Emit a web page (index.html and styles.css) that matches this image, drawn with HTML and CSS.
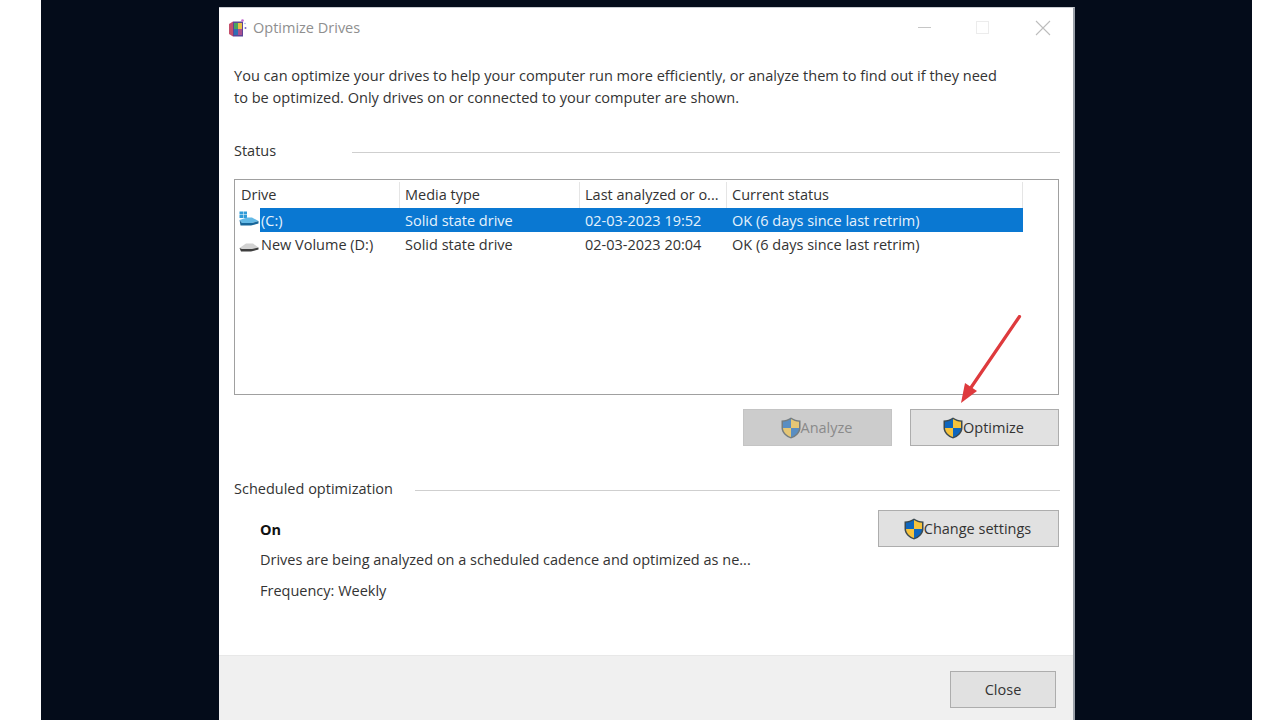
FILE: index.html
```html
<!DOCTYPE html>
<html lang="en">
<head>
    <meta charset="UTF-8">
    <title>Optimize Drives</title>
    <link rel="stylesheet" href="styles.css">
</head>
<body>
    <svg width="0" height="0" class="defs">
        <symbol id="shield" viewBox="0 0 20 22">
            <path d="M10 0.500 C7 2.500 4 3.500 0.500 3.500 V11 C0.500 16 5 20 10 21.500 C15 20 19.500 16 19.500 11 V3.500 C16 3.500 13 2.500 10 0.500 Z" fill="#3c4a50"/>
            <path d="M10 2 C7.500 3.600 5 4.600 2 4.800 V11 H10 Z" fill="#0f66bd"/>
            <path d="M10 2 C12.500 3.600 15 4.600 18 4.800 V11 H10 Z" fill="#f6c33c"/>
            <path d="M2 11 H10 V20 C6 18.800 2.300 15.500 2 11 Z" fill="#f6c33c"/>
            <path d="M18 11 H10 V20 C14 18.800 17.700 15.500 18 11 Z" fill="#0f66bd"/>
        </symbol>
    </svg>
    <div class="stage">
        <div class="window">
            <div class="titlebar">
                <svg class="app-icon" width="18" height="18" viewBox="0 0 18 18">
                    <path d="M0 5 L4 2.500 V17.500 L0 15 Z" fill="#c4506c"/>
                    <path d="M4 2.500 H14 V17.500 H4 Z" fill="#5d4596"/>
                    <rect x="5" y="4" width="4" height="6" fill="#4aa35f"/>
                    <rect x="9" y="4" width="4" height="6" fill="#e9bf48"/>
                    <rect x="5" y="10" width="4" height="6" fill="#2f6fb5"/>
                    <rect x="9" y="10" width="4" height="6" fill="#a8508f"/>
                    <circle cx="13.500" cy="1.500" r="1.300" fill="#c56ad0"/>
                    <circle cx="16.500" cy="9" r="1" fill="#7a68c8"/>
                    <circle cx="16" cy="4.500" r="0.800" fill="#9fb4e8"/>
                </svg>
                <span class="title">Optimize Drives</span>
                <div class="controls">
                    <svg width="16" height="16" viewBox="0 0 16 16"><path d="M1 7.500 H14" stroke="#c6c6c6" stroke-width="1"/></svg>
                    <svg width="16" height="16" viewBox="0 0 16 16"><rect x="0.500" y="1.500" width="12" height="12" fill="none" stroke="#ececec"/></svg>
                    <svg width="16" height="16" viewBox="0 0 16 16"><path d="M1 1 L15 15 M15 1 L1 15" stroke="#bdbdbd" stroke-width="1.100"/></svg>
                </div>
            </div>

            <div class="content">
                <p class="intro">You can optimize your drives to help your computer run more efficiently, or analyze them to find out if they need<br>to be optimized. Only drives on or connected to your computer are shown.</p>

                <div class="group-head status-head">
                    <span>Status</span>
                    <i></i>
                </div>

                <div class="list">
                    <div class="row head">
                        <div>Drive</div>
                        <div>Media type</div>
                        <div>Last analyzed or o...</div>
                        <div>Current status</div>
                    </div>
                    <div class="row selected">
                        <div class="drive">
                            <svg width="20" height="18" viewBox="0 0 20 18">
                                <rect x="0.500" y="0.500" width="3.500" height="3" fill="#2f9bd8"/>
                                <rect x="4.500" y="0.500" width="3.500" height="3" fill="#2f9bd8"/>
                                <rect x="0.500" y="4" width="3.500" height="3" fill="#2f9bd8"/>
                                <rect x="4.500" y="4" width="3.500" height="3" fill="#2f9bd8"/>
                                <path d="M0.500 9 L8 6.500 H13 L19.500 10 L13 12 H3 Z" fill="#63b9e6"/>
                                <path d="M0.500 9 L1.500 14.500 H12 L19.500 12.500 V10 L13 12 H3 Z" fill="#17669a"/>
                            </svg>
                            <span>(C:)</span>
                        </div>
                        <div>Solid state drive</div>
                        <div>02-03-2023 19:52</div>
                        <div>OK (6 days since last retrim)</div>
                    </div>
                    <div class="row">
                        <div class="drive">
                            <svg width="20" height="18" viewBox="0 0 20 18">
                                <path d="M0.500 12 L7 7.500 H14 L19.500 11.500 L13 13 H3 Z" fill="#d2d2d2"/>
                                <path d="M0.500 12 L2 15.500 H12 L19.500 13.500 V11.500 L13 13 H3 Z" fill="#3f3f3f"/>
                            </svg>
                            <span>New Volume (D:)</span>
                        </div>
                        <div>Solid state drive</div>
                        <div>02-03-2023 20:04</div>
                        <div>OK (6 days since last retrim)</div>
                    </div>
                </div>

                <div class="actions">
                    <button class="btn disabled"><svg width="20" height="22"><use href="#shield"/></svg>Analyze</button>
                    <button class="btn"><svg width="20" height="22"><use href="#shield"/></svg>Optimize</button>
                </div>

                <div class="group-head sched-head">
                    <span>Scheduled optimization</span>
                    <i></i>
                </div>

                <div class="sched">
                    <div class="sched-text">
                        <div class="on">On</div>
                        <div class="desc">Drives are being analyzed on a scheduled cadence and optimized as ne...</div>
                        <div class="freq">Frequency: Weekly</div>
                    </div>
                    <button class="btn change"><svg width="20" height="22"><use href="#shield"/></svg>Change settings</button>
                </div>
            </div>

            <div class="footer">
                <button class="btn close">Close</button>
            </div>

            <!-- red annotation arrow -->
            <svg class="arrow" width="70" height="100" viewBox="0 0 70 100">
                <path d="M63.500 1.500 L14 74" stroke="#de3a3d" stroke-width="3.200" stroke-linecap="round"/>
                <path d="M5 88 L9 68 L21 76 Z" fill="#de3a3d"/>
            </svg>
        </div>
    </div>
</body>
</html>
```

FILE: styles.css
```css
* {
    margin: 0;
    padding: 0;
    box-sizing: border-box;
}
body {
    background: #fff;
    font-family: "Open Sans", "Noto Sans", sans-serif;
    font-size: 14.5px;
    color: #333;
    width: 1280px;
    height: 720px;
    overflow: hidden;
}
.defs {
    position: absolute;
}
.stage {
    margin-left: 41px;
    width: 1211px;
    height: 720px;
    background: #040c1a;
    padding: 7px 0 0 178px;
}
.window {
    width: 856px;
    height: 713px;
    background: #fff;
    border-right: 2px solid #9aa0a8;
    border-top: 1px solid #c9ccd2;
    display: flex;
    flex-direction: column;
    position: relative;
}
.titlebar {
    height: 39px;
    display: flex;
    align-items: center;
    padding-left: 10px;
    flex-shrink: 0;
}
.title {
    margin-left: 6px;
    color: #8f8f8f;
}
.controls {
    margin-left: auto;
    margin-right: 22px;
    display: flex;
    gap: 43px;
}
.content {
    flex: 1;
    padding: 17px 13px 0 15px;
}
.intro {
    font-size: 14.55px;
    line-height: 22px;
    height: 44px;
}
.group-head {
    display: flex;
    align-items: center;
    height: 22px;
}
.group-head i {
    flex: 1;
    height: 1px;
    background: #cfcfcf;
    margin-top: 4px;
}
.status-head {
    margin-top: 31px;
}
.status-head i {
    margin-left: 76px;
}
.sched-head {
    margin-top: 31px;
}
.sched-head i {
    margin-left: 22px;
}
.list {
    margin-top: 18px;
    width: 825px;
    height: 216px;
    border: 1px solid #a0a0a0;
    padding-top: 2px;
}
.row {
    display: grid;
    grid-template-columns: 165px 180px 147px 296px;
    width: 788px;
    height: 25px;
    align-items: center;
}
.row > div {
    padding-left: 5px;
    white-space: nowrap;
}
.row.head {
    height: 26px;
}
.row.head > div {
    height: 26px;
    line-height: 25px;
    border-right: 1px solid #e5e5e5;
}
.row.head > div:first-child {
    padding-left: 6px;
}
.row.selected {
    height: 24px;
    background: linear-gradient(to right, transparent 25px, #0a78d2 25px);
    color: #e6f2fc;
}
.row .drive {
    padding-left: 4px;
    display: flex;
    align-items: center;
    gap: 2px;
}
.actions {
    display: flex;
    justify-content: flex-end;
    gap: 18px;
    margin-top: 14px;
    width: 825px;
}
.btn {
    font: inherit;
    color: #333;
    width: 149px;
    height: 37px;
    background: #e1e1e1;
    border: 1px solid #adadad;
    display: flex;
    align-items: center;
    justify-content: center;
}
.btn svg {
    margin-left: -2px;
}
.btn.disabled {
    background: #cccccc;
    border-color: #c4c4c4;
    color: #8a8a8a;
}
.btn.disabled svg {
    opacity: 0.6;
}
.sched {
    display: flex;
    justify-content: space-between;
    align-items: flex-start;
    width: 825px;
    margin-top: 11px;
}
.sched-text {
    padding-left: 26px;
}
.on {
    font-weight: 700;
    color: #111;
    margin-top: 10px;
    line-height: 20px;
}
.desc {
    margin-top: 10px;
    line-height: 20px;
}
.freq {
    margin-top: 11px;
    line-height: 20px;
}
.btn.change {
    width: 181px;
    height: 37px;
}
.footer {
    height: 65px;
    background: #f0f0f0;
    border-top: 1px solid #e8e8e8;
    flex-shrink: 0;
    padding: 15px 17px 0 0;
    display: flex;
    justify-content: flex-end;
}
.btn.close {
    width: 106px;
}
.arrow {
    position: absolute;
    left: 737px;
    top: 307px;
}
```
